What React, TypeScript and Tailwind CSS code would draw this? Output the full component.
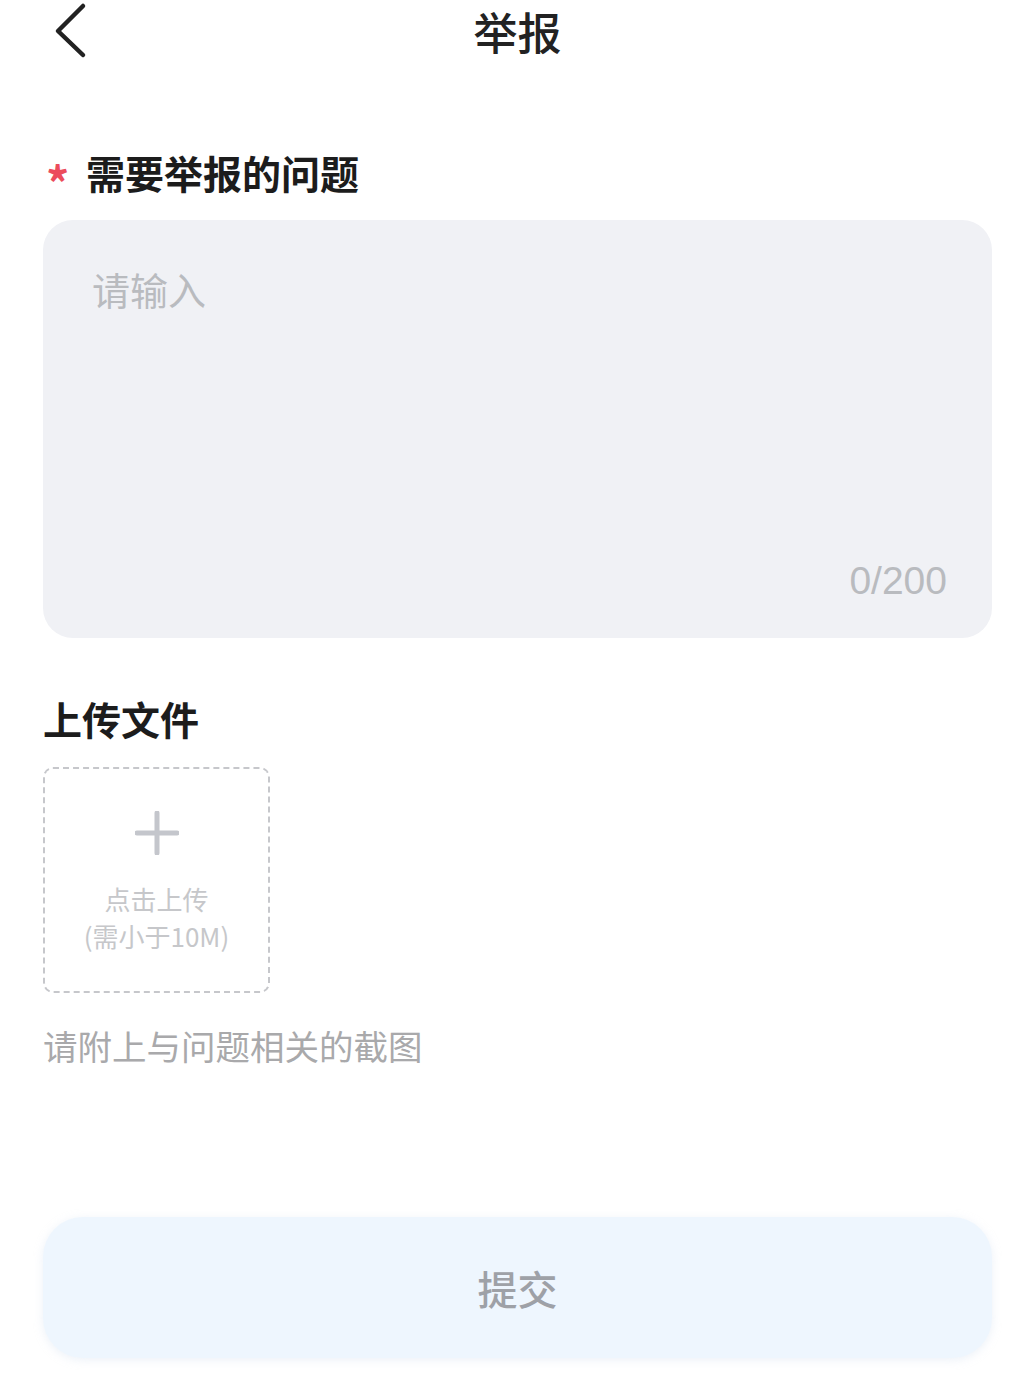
import React, { useState } from 'react';

const font = "font-['Noto_Sans_CJK_SC','Noto_Sans',sans-serif]";

export default function App(): JSX.Element {
  const [text, setText] = useState<string>('');

  return (
    <div className={`${font} w-[1035px] min-h-[1392px] bg-white px-[43px]`}>
      {/* header */}
      <div className="relative flex h-[62px] items-center justify-center">
        <button className="absolute left-[10px] top-[2px]">
          <svg width="40" height="58" viewBox="0 0 40 58" fill="none">
            <path d="M30 4 L5 29 L30 53" stroke="#222" strokeWidth="4.5" strokeLinecap="round" strokeLinejoin="round" />
          </svg>
        </button>
        <h1 className="text-[44px] leading-[52px] font-medium text-[#222]">举报</h1>
      </div>

      {/* problem */}
      <div className="mt-[86px] flex h-[48px] items-center">
        <span className="relative top-[9px] w-[43px] pl-[3px] text-[46px] leading-[48px] font-bold text-[#ec4c5c]">*</span>
        <span className="text-[39px] leading-[48px] font-bold text-[#1c1c1c]">需要举报的问题</span>
      </div>

      <div className="relative mt-[24px] h-[418px] rounded-[30px] bg-[#f0f1f5] px-[49px] pt-[50px]">
        <textarea
          value={text}
          onChange={(e) => setText(e.target.value.slice(0, 200))}
          placeholder="请输入"
          className="h-[300px] w-full resize-none bg-transparent text-[38px] leading-none text-[#333] outline-none placeholder:text-[#b9bbbf]"
        />
        <span className="absolute bottom-[38px] right-[45px] font-['Liberation_Sans',sans-serif] text-[39px] leading-none text-[#b9bbbf]">
          {text.length}/200
        </span>
      </div>

      {/* upload */}
      <h2 className="mt-[56px] text-[39px] leading-[48px] font-bold text-[#1c1c1c]">上传文件</h2>

      <div className="mt-[25px] flex h-[226px] w-[227px] flex-col items-center rounded-[10px] border-2 border-dashed border-[#c6c7cb]">
        <svg className="mt-[42px]" width="44" height="44" viewBox="0 0 44 44">
          <path d="M22 2 V42 M2 22 H42" stroke="#c4c6cc" strokeWidth="5" strokeLinecap="round" />
        </svg>
        <span className="mt-[28px] text-[26px] leading-[32px] text-[#c6c7ca]">点击上传</span>
        <span className="mt-[5px] text-[26px] leading-[32px] text-[#c6c7ca]">(需小于10M)</span>
      </div>

      <p className="mt-[30px] text-[34.5px] leading-[44px] text-[#a9a9ab]">请附上与问题相关的截图</p>

      {/* submit */}
      <button className="mt-[150px] flex h-[141px] w-full items-center justify-center rounded-[40px] bg-[#eef6fe] shadow-[0_2px_10px_rgba(200,215,235,0.35)]">
        <span className="text-[40px] leading-none font-medium text-[#9ea1a7]">提交</span>
      </button>
    </div>
  );
}
